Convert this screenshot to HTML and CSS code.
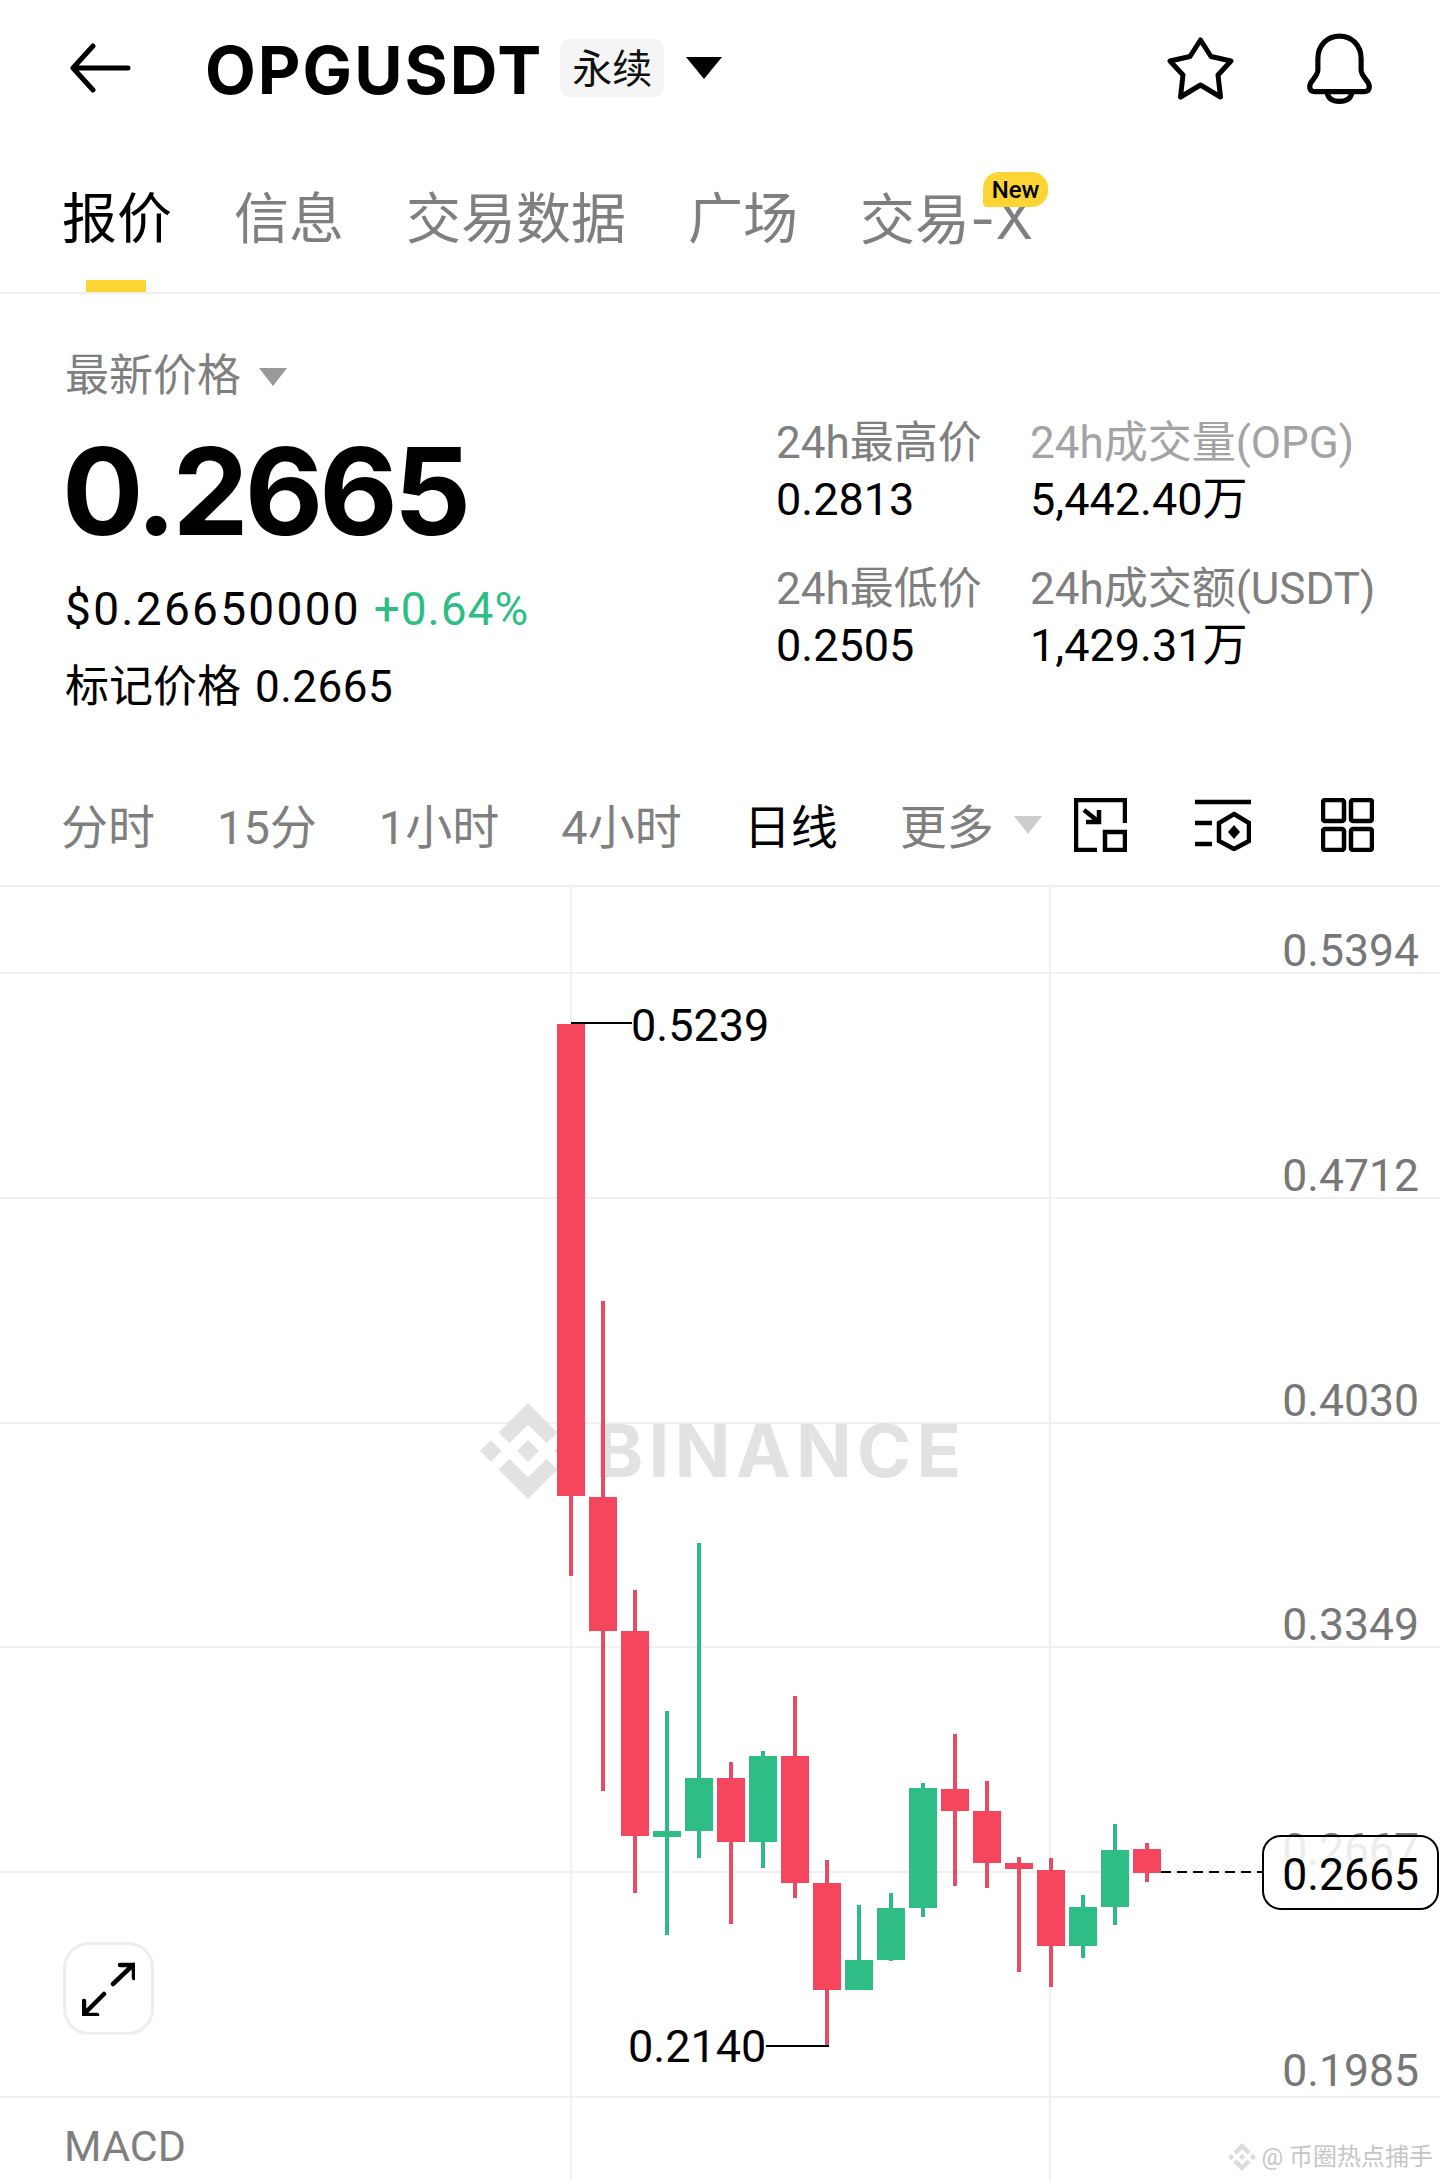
FILE: index.html
```html
<!DOCTYPE html>
<html lang="zh">
<head>
<meta charset="utf-8">
<title>OPGUSDT</title>
<link rel="stylesheet" href="styles.css">
</head>
<body>
<div class="page">
  <header class="header">
    <svg class="ic-back" viewBox="0 0 62 50"><path d="M59 25H5M24 3L4 25L24 47"/></svg>
    <h1 class="title">OPGUSDT</h1>
    <span class="tag">永续</span>
    <span class="caret caret-black"></span>
    <span class="spacer"></span>
    <svg class="ic-star" viewBox="0 0 67 64"><path d="M33.5 4L44 20.5L64 25L51 39L53.5 61L33.5 49L13.5 61L16 39L3 25L23 20.5Z"/></svg>
    <svg class="ic-bell" viewBox="0 0 66 69"><path d="M33 3C21 3 12 12 12 25V36C12 40 9 43 6 47C3 51 3 57 9 57H57C63 57 63 51 60 47C57 43 54 40 54 36V25C54 12 45 3 33 3Z"/><path d="M21 58C22 64 27 66.5 33 66.5C39 66.5 44 64 45 58"/></svg>
  </header>

  <nav class="tabs">
    <div class="tab tab-active">报价</div>
    <div class="tab">信息</div>
    <div class="tab">交易数据</div>
    <div class="tab">广场</div>
    <div class="tab">交易<span class="tab-suffix">-X</span><span class="badge">New</span></div>
  </nav>

  <section class="price">
    <div class="price-left">
      <div class="last-label">最新价格<span class="caret caret-gray"></span></div>
      <div class="last-value">0.2665</div>
      <div class="usd">$0.26650000 <span class="up">+0.64%</span></div>
      <div class="mark">标记价格 <span class="mark-num">0.2665</span></div>
    </div>
    <div class="stats">
      <div class="stat">
        <div class="stat-label">24h最高价</div>
        <div class="stat-value">0.2813</div>
      </div>
      <div class="stat">
        <div class="stat-label stat-label-light">24h成交量(OPG)</div>
        <div class="stat-value">5,442.40万</div>
      </div>
      <div class="stat">
        <div class="stat-label">24h最低价</div>
        <div class="stat-value">0.2505</div>
      </div>
      <div class="stat">
        <div class="stat-label">24h成交额(USDT)</div>
        <div class="stat-value">1,429.31万</div>
      </div>
    </div>
  </section>

  <div class="intervals">
    <span class="iv">分时</span>
    <span class="iv">15分</span>
    <span class="iv">1小时</span>
    <span class="iv">4小时</span>
    <span class="iv iv-active">日线</span>
    <span class="iv">更多</span>
    <span class="caret caret-light"></span>
    <svg class="ic-tool ic-first" viewBox="0 0 53 54"><path d="M23 52H2V2H51V25"/><rect x="31" y="34" width="20" height="18"/><path d="M10 12L25 24M25 12V24H12"/></svg>
    <svg class="ic-tool ic-second" viewBox="0 0 56 52"><path d="M0 3H56M0 24H17M0 45H17"/><path d="M39 15L54 24V42L39 50L24 42V24Z"/><path class="solid" d="M39 26L45 33L39 40L33 33Z"/></svg>
    <svg class="ic-tool ic-third" viewBox="0 0 53 54"><rect x="2" y="2" width="21" height="21" rx="2"/><rect x="30" y="2" width="21" height="21" rx="2"/><rect x="2" y="31" width="21" height="21" rx="2"/><rect x="30" y="31" width="21" height="21" rx="2"/></svg>
  </div>

  <div class="chart">
    <svg class="plot" viewBox="0 885 1440 1296">
      <g class="grid">
        <rect x="0" y="885" width="1440" height="2"/>
        <rect x="0" y="972" width="1440" height="2"/>
        <rect x="0" y="1197" width="1440" height="2"/>
        <rect x="0" y="1422" width="1440" height="2"/>
        <rect x="0" y="1646" width="1440" height="2"/>
        <rect x="0" y="1871" width="1440" height="2"/>
        <rect x="0" y="2096" width="1440" height="2"/>
        <rect x="570" y="887" width="2" height="1294"/>
        <rect x="1049" y="887" width="2" height="1294"/>
      </g>

      <g class="watermark">
        <svg x="480" y="1403" width="96" height="96" viewBox="0 0 126.61 126.61"><path d="M38.73 53.2l24.59-24.58 24.6 24.6 14.3-14.31L63.32 0 24.43 38.9 38.73 53.2z M0 63.31l14.3-14.31 14.31 14.31-14.31 14.3z M38.73 73.41l24.59 24.59 24.6-24.6 14.31 14.29-38.9 38.91-38.91-38.88-.02-.02z M98.04 63.31l14.3-14.31 14.31 14.3-14.31 14.32z M77.83 63.3L63.32 48.78 52.59 59.51l-1.24 1.23-2.54 2.54 14.51 14.5 14.51-14.47z"/></svg>
        <text class="wm-word" x="595" y="1477">BINANCE</text>
      </g>

      <g class="wick-r">
        <rect x="569" y="1496" width="4" height="80"/>
        <rect x="601" y="1301" width="4" height="490"/>
        <rect x="633" y="1590" width="4" height="303"/>
        <rect x="729" y="1762" width="4" height="162"/>
        <rect x="793" y="1696" width="4" height="202"/>
        <rect x="825" y="1860" width="4" height="186"/>
        <rect x="953" y="1734" width="4" height="152"/>
        <rect x="985" y="1781" width="4" height="107"/>
        <rect x="1017" y="1857" width="4" height="115"/>
        <rect x="1049" y="1858" width="4" height="129"/>
        <rect x="1145" y="1843" width="4" height="39"/>
      </g>
      <g class="wick-g">
        <rect x="665" y="1711" width="4" height="224"/>
        <rect x="697" y="1543" width="4" height="315"/>
        <rect x="761" y="1751" width="4" height="117"/>
        <rect x="857" y="1905" width="4" height="60"/>
        <rect x="889" y="1893" width="4" height="68"/>
        <rect x="921" y="1783" width="4" height="134"/>
        <rect x="1081" y="1895" width="4" height="63"/>
        <rect x="1113" y="1824" width="4" height="101"/>
      </g>
      <g class="body-r">
        <rect x="557" y="1024" width="28" height="472"/>
        <rect x="589" y="1497" width="28" height="134"/>
        <rect x="621" y="1631" width="28" height="205"/>
        <rect x="717" y="1778" width="28" height="64"/>
        <rect x="781" y="1756" width="28" height="127"/>
        <rect x="813" y="1883" width="28" height="107"/>
        <rect x="941" y="1789" width="28" height="22"/>
        <rect x="973" y="1811" width="28" height="52"/>
        <rect x="1005" y="1863" width="28" height="6"/>
        <rect x="1037" y="1870" width="28" height="76"/>
        <rect x="1133" y="1849" width="28" height="24"/>
      </g>
      <g class="body-g">
        <rect x="653" y="1831" width="28" height="6"/>
        <rect x="685" y="1778" width="28" height="53"/>
        <rect x="749" y="1756" width="28" height="86"/>
        <rect x="845" y="1960" width="28" height="30"/>
        <rect x="877" y="1908" width="28" height="52"/>
        <rect x="909" y="1788" width="28" height="120"/>
        <rect x="1069" y="1907" width="28" height="39"/>
        <rect x="1101" y="1850" width="28" height="57"/>
      </g>

      <path class="marker" d="M571 1023H632M766 2046H829"/>
      <text class="mark-text" x="631" y="1041">0.5239</text>
      <text class="mark-text" x="628" y="2062">0.2140</text>

      <text class="axis" x="1419" y="966">0.5394</text>
      <text class="axis" x="1419" y="1191">0.4712</text>
      <text class="axis" x="1419" y="1416">0.4030</text>
      <text class="axis" x="1419" y="1640">0.3349</text>
      <text class="axis" x="1419" y="1865">0.2667</text>
      <text class="axis" x="1419" y="2086">0.1985</text>

      <path class="dash" d="M1161 1872H1263"/>
      <rect class="pill" x="1263" y="1836" width="175" height="73" rx="18"/>
      <text class="axis axis-now" x="1419" y="1890">0.2665</text>
    </svg>

    <button class="expand" type="button">
      <svg viewBox="0 0 53 54"><path d="M31 22L51 3M38 3H52V16M22 32L2 52M2 39V53H15"/></svg>
    </button>
    <div class="macd">MACD</div>
    <div class="credit">
      <svg viewBox="0 0 126.61 126.61"><path d="M38.73 53.2l24.59-24.58 24.6 24.6 14.3-14.31L63.32 0 24.43 38.9 38.73 53.2z M0 63.31l14.3-14.31 14.31 14.31-14.31 14.3z M38.73 73.41l24.59 24.59 24.6-24.6 14.31 14.29-38.9 38.91-38.91-38.88-.02-.02z M98.04 63.31l14.3-14.31 14.31 14.3-14.31 14.32z M77.83 63.3L63.32 48.78 52.59 59.51l-1.24 1.23-2.54 2.54 14.51 14.5 14.51-14.47z"/></svg>
      <span>@ 币圈热点捕手</span>
    </div>
  </div>
</div>
</body>
</html>
```
FILE: styles.css
```css
* { box-sizing: border-box; }
html, body { margin: 0; padding: 0; background: #fff; }
body { font-family: Roboto, "Noto Sans CJK SC", sans-serif; color: #000; }
.page { width: 1440px; height: 2181px; overflow: hidden; }

.header { height: 136px; display: flex; align-items: center; padding-left: 69px; padding-right: 66px; }
.ic-back { width: 62px; height: 50px; fill: none; stroke: #000; stroke-width: 5; stroke-linecap: round; stroke-linejoin: round; }
.title { margin: 3px 0 0 74px; font-family: Inter, Roboto, sans-serif; font-size: 66px; line-height: 64px; font-weight: 700; letter-spacing: 2px; }
.tag { margin-left: 17px; width: 104px; height: 58px; padding-top: 4px; display: flex; align-items: center; justify-content: center; background: #f5f5f5; border-radius: 10px; font-size: 40px; line-height: 40px; color: #111; }
.caret { display: inline-block; width: 0; height: 0; border-style: solid; border-color: transparent; }
.caret-black { margin-left: 22px; border-width: 22px 18px 0; border-top-color: #000; }
.spacer { flex: 1; }
.ic-star { width: 67px; height: 64px; fill: none; stroke: #000; stroke-width: 5; stroke-linejoin: round; }
.ic-bell { margin-left: 71px; width: 69px; height: 71px; fill: none; stroke: #000; stroke-width: 5; stroke-linejoin: round; }

.tabs { height: 158px; display: flex; gap: 62px; padding-left: 62px; border-bottom: 2px solid #eeeeee; }
.tab { position: relative; padding-top: 56px; font-size: 55px; line-height: 54px; color: #7f7f7f; white-space: nowrap; }
.tab-suffix { font-family: Inter, Roboto, sans-serif; }
.tab-active { color: #000; }
.tab-active::after { content: ""; position: absolute; left: 24px; bottom: 0; width: 60px; height: 12px; background: #fcd535; }
.badge { position: absolute; left: 123px; top: 36px; width: 65px; height: 35px; display: flex; align-items: center; justify-content: center; background: #fcd535; border-radius: 16px 16px 16px 4px; font-size: 24px; line-height: 24px; font-weight: 500; color: #000; }

.price { height: 480px; display: flex; padding-left: 65px; }
.price-left { width: 711px; padding-top: 60px; }
.last-label { display: flex; align-items: center; font-size: 44px; line-height: 44px; color: #7f7f7f; }
.caret-gray { margin-left: 18px; margin-top: 1px; border-width: 18px 14px 0; border-top-color: #999; }
.last-value { margin: 31px 0 0 -3px; font-family: Inter, Roboto, sans-serif; font-size: 121px; line-height: 124px; font-weight: 700; letter-spacing: -4px; }
.usd { margin-top: 33px; font-size: 46px; line-height: 46px; letter-spacing: 2.3px; }
.up { color: #2ebd85; letter-spacing: 1px; margin-left: -1px; }
.mark { margin-top: 33px; font-size: 44px; line-height: 44px; word-spacing: 3px; }
.mark-num { letter-spacing: .5px; }
.stats { display: grid; grid-template-columns: 254px auto; grid-auto-rows: 146px; padding-top: 127px; }
.stat-label { font-size: 44px; line-height: 44px; color: #7f7f7f; white-space: nowrap; }
.stat-label-light { color: #a3a3a3; }
.stat-value { margin-top: 13px; font-size: 45px; line-height: 44px; white-space: nowrap; }

.intervals { height: 111px; display: flex; align-items: center; gap: 62px; padding-left: 61px; padding-bottom: 9px; }
.iv { margin-top: 6px; font-size: 47px; line-height: 46px; color: #7f7f7f; white-space: nowrap; }
.iv-active { color: #000; }
.caret-light { margin-left: -42px; border-width: 18px 14px 0; border-top-color: #ccc; }
.ic-tool { fill: none; stroke: #000; stroke-width: 4.5; flex: none; }
.ic-tool .solid { fill: #000; stroke: none; }
.ic-first { width: 53px; height: 54px; margin-left: -30px; }
.ic-second { width: 56px; height: 52px; margin-left: 6px; }
.ic-third { width: 53px; height: 54px; margin-left: 8px; }

.chart { position: relative; height: 1296px; }
.plot { display: block; width: 1440px; height: 1296px; }
.grid { fill: #f0f0f0; }
.watermark { fill: #e2e2e2; }
.wm-word { font-family: Inter, Roboto, sans-serif; font-size: 73px; font-weight: 700; letter-spacing: 5.5px; }
.wick-r { fill: #e74c66; }
.wick-g { fill: #2fb888; }
.body-r { fill: #f6465d; }
.body-g { fill: #2ebd85; }
.marker { fill: none; stroke: #000; stroke-width: 2; }
.mark-text { font-size: 45px; fill: #000; }
.axis { font-size: 44.5px; fill: #777; text-anchor: end; }
.axis-now { fill: #000; }
.dash { fill: none; stroke: #000; stroke-width: 2; stroke-dasharray: 10 6; }
.pill { fill: rgba(255,255,255,.86); stroke: #000; stroke-width: 2; }

.expand { position: absolute; left: 63px; top: 1057px; width: 91px; height: 93px; padding: 0; display: flex; align-items: center; justify-content: center; background: #fff; border: 3px solid #eeeeee; border-radius: 26px; }
.expand svg { width: 53px; height: 54px; fill: none; stroke: #000; stroke-width: 4.5; stroke-linecap: round; }
.macd { position: absolute; left: 64px; top: 1240px; font-size: 43px; line-height: 42px; color: #7f7f7f; }
.credit { position: absolute; right: 7px; top: 1258px; display: flex; align-items: center; gap: 5px; font-size: 24px; line-height: 28px; color: #c6c6c6; }
.credit svg { width: 28px; height: 28px; fill: #dcdcdc; }
```
